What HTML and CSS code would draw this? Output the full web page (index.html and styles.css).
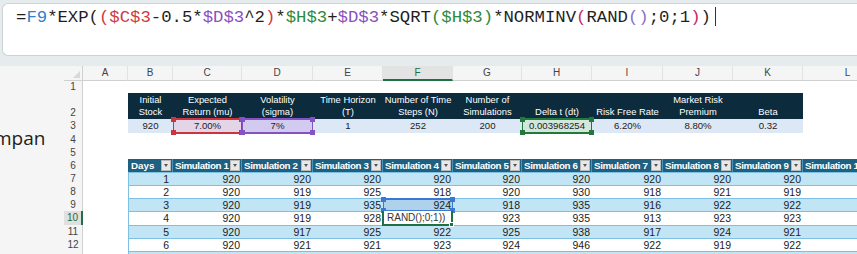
FILE: index.html
```html
<!DOCTYPE html>
<html lang="en">
<head>
    <meta charset="UTF-8">
    <title>Monte Carlo Stock Simulation</title>
    <link rel="stylesheet" href="styles.css">
</head>
<body>
    <div class="formula-area">
        <div class="formula-bar">=<span class="k-blue">F9</span>*EXP(<span class="k-red">($C$3</span>-0.5*<span class="k-purple">$D$3</span>^2<span class="k-red">)</span>*<span class="k-green">$H$3</span>+<span class="k-purple">$D$3</span>*SQRT<span class="k-green">($H$3)</span>*NORMINV<span class="k-pink">(</span>RAND<span class="k-lav">()</span>;0;1<span class="k-pink">)</span>)<span class="caret"></span></div>
    </div>

    <div class="main">
        <aside class="side"><span class="side-text">mpan</span></aside>

        <div class="sheet">
            <!-- column letters -->
            <div class="row r-head">
                <div class="corner"><span class="tri"></span></div>
                <div class="ch">A</div><div class="ch">B</div><div class="ch">C</div><div class="ch">D</div>
                <div class="ch">E</div><div class="ch active">F</div><div class="ch">G</div><div class="ch">H</div>
                <div class="ch">I</div><div class="ch">J</div><div class="ch">K</div><div class="ch">L</div>
            </div>

            <div class="row r-std">
                <div class="rn">1</div>
            </div>

            <!-- inputs table -->
            <div class="row r-tall">
                <div class="rn bottom">2</div>
                <div></div>
                <div class="th2">Initial<br>Stock</div>
                <div class="th2">Expected<br>Return (mu)</div>
                <div class="th2">Volatility<br>(sigma)</div>
                <div class="th2">Time Horizon<br>(T)</div>
                <div class="th2">Number of Time<br>Steps (N)</div>
                <div class="th2">Number of<br>Simulations</div>
                <div class="th2">Delta t (dt)</div>
                <div class="th2">Risk Free Rate</div>
                <div class="th2">Market Risk<br>Premium</div>
                <div class="th2">Beta</div>
            </div>

            <div class="row r-val">
                <div class="rn">3</div>
                <div></div>
                <div class="v3">920</div>
                <div class="v3 hl-red">7.00%<span class="ref ref-red"><i class="hd tl"></i><i class="hd bl"></i><i class="hd tr"></i><i class="hd br"></i></span></div>
                <div class="v3 hl-purple">7%<span class="ref ref-purple"><i class="hd tl"></i><i class="hd bl"></i><i class="hd tr"></i><i class="hd br"></i></span></div>
                <div class="v3">1</div>
                <div class="v3">252</div>
                <div class="v3">200</div>
                <div class="v3 hl-green">0.003968254<span class="ref ref-green"><i class="hd tl"></i><i class="hd bl"></i><i class="hd tr"></i><i class="hd br"></i></span></div>
                <div class="v3">6.20%</div>
                <div class="v3">8.80%</div>
                <div class="v3">0.32</div>
            </div>

            <div class="row r-std"><div class="rn">4</div></div>
            <div class="row r-std"><div class="rn">5</div></div>

            <!-- simulations table -->
            <div class="row r-std">
                <div class="rn">6</div>
                <div></div>
                <div class="tbh first">Days<span class="dd"></span></div>
                <div class="tbh">Simulation 1<span class="dd"></span></div>
                <div class="tbh">Simulation 2<span class="dd"></span></div>
                <div class="tbh">Simulation 3<span class="dd"></span></div>
                <div class="tbh">Simulation 4<span class="dd"></span></div>
                <div class="tbh">Simulation 5<span class="dd"></span></div>
                <div class="tbh">Simulation 6<span class="dd"></span></div>
                <div class="tbh">Simulation 7<span class="dd"></span></div>
                <div class="tbh">Simulation 8<span class="dd"></span></div>
                <div class="tbh">Simulation 9<span class="dd"></span></div>
                <div class="tbh">Simulation 10<span class="dd"></span></div>
            </div>

            <div class="row r-std band">
                <div class="rn">7</div><div></div>
                <div class="td first">1</div><div class="td">920</div><div class="td">920</div><div class="td">920</div><div class="td">920</div><div class="td">920</div><div class="td">920</div><div class="td">920</div><div class="td">920</div><div class="td">920</div><div class="td"></div>
            </div>
            <div class="row r-std">
                <div class="rn">8</div><div></div>
                <div class="td first">2</div><div class="td">920</div><div class="td">919</div><div class="td">925</div><div class="td">918</div><div class="td">920</div><div class="td">930</div><div class="td">918</div><div class="td">921</div><div class="td">919</div><div class="td"></div>
            </div>
            <div class="row r-std band">
                <div class="rn">9</div><div></div>
                <div class="td first">3</div><div class="td">920</div><div class="td">919</div><div class="td">935</div>
                <div class="td sel">924<span class="ref ref-blue"><i class="hd tl"></i><i class="hd bl"></i><i class="hd tr"></i><i class="hd br"></i></span></div>
                <div class="td">918</div><div class="td">935</div><div class="td">916</div><div class="td">922</div><div class="td">922</div><div class="td"></div>
            </div>
            <div class="row r-ten">
                <div class="rn active">10</div><div></div>
                <div class="td first">4</div><div class="td">920</div><div class="td">919</div><div class="td">928</div>
                <div class="td editing"><span class="edit-box">RAND();0;1))<i class="fill"></i></span></div>
                <div class="td">923</div><div class="td">935</div><div class="td">913</div><div class="td">923</div><div class="td">923</div><div class="td"></div>
            </div>
            <div class="row r-std band">
                <div class="rn">11</div><div></div>
                <div class="td first">5</div><div class="td">920</div><div class="td">917</div><div class="td">925</div><div class="td">922</div><div class="td">925</div><div class="td">938</div><div class="td">917</div><div class="td">924</div><div class="td">921</div><div class="td"></div>
            </div>
            <div class="row r-std">
                <div class="rn">12</div><div></div>
                <div class="td first">6</div><div class="td">920</div><div class="td">921</div><div class="td">921</div><div class="td">923</div><div class="td">924</div><div class="td">946</div><div class="td">922</div><div class="td">919</div><div class="td">922</div><div class="td"></div>
            </div>
            <div class="row r-last band">
                <div class="rn"></div><div></div>
                <div class="td first"></div><div class="td"></div><div class="td"></div><div class="td"></div><div class="td"></div><div class="td"></div><div class="td"></div><div class="td"></div><div class="td"></div><div class="td"></div><div class="td"></div>
            </div>
        </div>
    </div>
</body>
</html>
```

FILE: styles.css
```css
* {
    margin: 0;
    padding: 0;
    box-sizing: border-box;
}

body {
    font-family: 'Liberation Sans', Arial, sans-serif;
    background: #ffffff;
    width: 857px;
    height: 254px;
    overflow: hidden;
}

/* formula bar */
.formula-area {
    height: 66px;
    background: #e6eced;
    padding: 3px 0 0 2px;
}

.formula-bar {
    height: 53px;
    background: #ffffff;
    border: 1px solid #cdd4d6;
    border-right: none;
    border-radius: 6px 0 0 6px;
    padding: 3px 0 0 13px;
    font-family: 'Liberation Mono', monospace;
    font-size: 17.3px;
    line-height: 22px;
    color: #1f1f1f;
    white-space: nowrap;
}

.k-blue { color: #2f7fd0; }
.k-red { color: #d03a3f; }
.k-purple { color: #8a4fc0; }
.k-green { color: #2b8a3e; }
.k-pink { color: #c22a62; }
.k-lav { color: #8a6fd0; }

.caret {
    display: inline-block;
    width: 1px;
    height: 19px;
    background: #333;
    margin-left: 4px;
    vertical-align: -4px;
}

/* layout */
.main {
    display: flex;
    height: 188px;
}

.side {
    width: 64px;
    flex-shrink: 0;
    background: #f5f5f5;
    overflow: hidden;
    padding-top: 59px;
}

.side-text {
    display: block;
    margin-left: -6px;
    font-family: 'Open Sans', sans-serif;
    font-size: 19px;
    color: #222;
}

.sheet {
    flex: 1;
    overflow: hidden;
    font-size: 10px;
}

.row {
    display: grid;
    grid-template-columns: 19px 45px 45px 69px 71px 70px 70px 69px 70px 71px 70px 70px 90px;
    height: 13px;
}

.r-head { height: 14px; }
.r-tall { height: 26px; }
.r-val { height: 14px; }
.r-ten { height: 14px; }
.r-last { height: 4px; }

/* headers */
.corner {
    background: #f5f5f5;
    border-right: 1px solid #d0d0d0;
    border-bottom: 1px solid #d0d0d0;
    position: relative;
}

.tri {
    position: absolute;
    right: 2px;
    bottom: 2px;
    width: 0;
    height: 0;
    border-left: 7px solid transparent;
    border-bottom: 7px solid #d8d8d8;
}

.ch {
    background: #f5f5f5;
    border-bottom: 1px solid #d0d0d0;
    border-right: 1px solid #e2e2e2;
    color: #444;
    text-align: center;
    line-height: 13px;
}

.ch.active {
    background: #e3e3e3;
    border-bottom: 2px solid #1e7145;
    color: #1e6b3c;
}

.rn {
    background: #f5f5f5;
    border-right: 1px solid #d0d0d0;
    color: #444;
    text-align: center;
    line-height: 13px;
}

.rn.bottom {
    display: flex;
    align-items: flex-end;
    justify-content: center;
}

.rn.active {
    background: #e0e0e0;
    border-right: 2px solid #1e7145;
    color: #1e6b3c;
}

/* inputs table */
.th2 {
    background: #0c2c3e;
    color: #ffffff;
    font-size: 9.4px;
    line-height: 12.5px;
    text-align: center;
    display: flex;
    flex-direction: column;
    justify-content: flex-end;
    padding-bottom: 0.5px;
}

.v3 {
    background: #dce8f6;
    color: #222;
    font-size: 9.6px;
    line-height: 14px;
    text-align: center;
    position: relative;
}

.v3.hl-red { background: #e3d5e6; }
.v3.hl-purple { background: #d2cbef; }
.v3.hl-green { background: #d3e6dc; }

.ref {
    position: absolute;
    top: -1px;
    bottom: -1px;
    left: 0;
    right: 0;
    border-style: solid;
    border-width: 2px 1px;
    z-index: 2;
}

.ref-red { border-color: #cc3340; }
.ref-purple { border-color: #8452c4; }
.ref-green { border-color: #217a3c; }
.ref-blue { border-color: #3b78d0; }

.hd {
    position: absolute;
    width: 5px;
    height: 5px;
}

.ref-red .hd { background: #cc3340; }
.ref-purple .hd { background: #8452c4; }
.ref-green .hd { background: #217a3c; }
.ref-blue .hd { background: #3b78d0; }

.hd.tl { top: -3px; left: -3px; }
.hd.tr { top: -3px; right: -3px; }
.hd.bl { bottom: -3px; left: -3px; }
.hd.br { bottom: -3px; right: -3px; }

/* simulations table */
.tbh {
    background: #1f5f80;
    color: #ffffff;
    font-weight: bold;
    font-size: 9.8px;
    letter-spacing: -0.4px;
    line-height: 13px;
    padding-left: 2px;
    border-right: 1px solid #4d94bd;
    position: relative;
    white-space: nowrap;
    overflow: hidden;
}

.tbh.first {
    padding-left: 3px;
    letter-spacing: 0;
}

.dd {
    position: absolute;
    right: 1px;
    top: 1px;
    width: 10px;
    height: 11px;
    background: #e8e8e8;
    border: 1px solid #b8b8b8;
}

.dd::after {
    content: '';
    position: absolute;
    left: 2px;
    top: 3px;
    border-left: 2.5px solid transparent;
    border-right: 2.5px solid transparent;
    border-top: 3px solid #555;
}

.td {
    background: #ffffff;
    border-top: 1px solid #7ec0e3;
    color: #222;
    font-size: 10.5px;
    line-height: 12px;
    text-align: right;
    padding-right: 2px;
    position: relative;
}

.band .td {
    background: #c2e5f6;
}

.td.first {
    border-left: 1px solid #7ec0e3;
    padding-right: 4px;
}

.td.sel {
    background: #aed2ec;
}

.td.editing {
    z-index: 3;
}

.edit-box {
    position: absolute;
    top: -1px;
    bottom: -1px;
    left: -1px;
    right: 0;
    background: #ffffff;
    border: 2px solid #1e7145;
    border-top: none;
    text-align: left;
    padding-left: 3px;
    font-size: 10px;
    line-height: 13px;
    color: #333;
}

.fill {
    position: absolute;
    right: -3px;
    bottom: -3px;
    width: 5px;
    height: 5px;
    background: #1e7145;
    border: 1px solid #ffffff;
}
```
